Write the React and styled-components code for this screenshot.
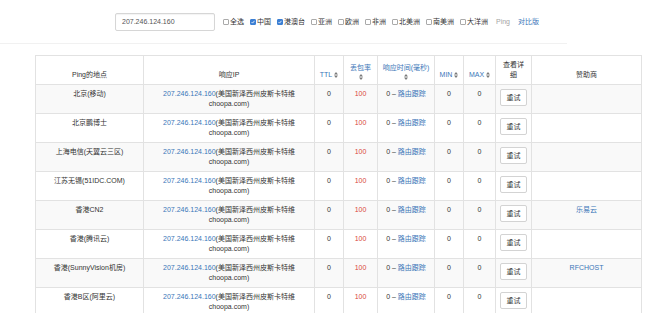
import React from 'react';
import styled, { createGlobalStyle } from 'styled-components';

const GlobalStyle = createGlobalStyle`
  html, body {
    margin: 0;
    padding: 0;
    background: #fff;
  }
  body {
    font-family: "Helvetica Neue", "Liberation Sans", "Noto Sans CJK SC", sans-serif;
    font-size: 7px;
    line-height: 10px;
    color: #333;
  }
`;

const Page = styled.div`
  width: 650px;
  height: 313px;
  overflow: hidden;
`;

// Search bar on top
const TopBar = styled.div`
  width: 567px;
  height: 44px;
  display: flex;
  align-items: center;
  padding-left: 115px;
  box-sizing: border-box;
  border-bottom: 1px solid #f1f1f1;
`;

const IpInput = styled.div`
  width: 100px;
  height: 18px;
  box-sizing: border-box;
  border: 1px solid #d6d6d6;
  border-radius: 2px;
  padding-left: 6px;
  display: flex;
  align-items: center;
  color: #555;
  margin-right: 8px;
  box-shadow: inset 0 1px 1px rgba(0, 0, 0, 0.05);
`;

const Region = styled.label`
  display: flex;
  align-items: center;
  margin-right: 6px;
  color: #333;
`;

const Box = styled.span`
  width: 4px;
  height: 4px;
  border: 1px solid ${props => (props.$checked ? '#3b7fd4' : '#aaa')};
  background: ${props => (props.$checked ? '#3b7fd4' : '#fff')};
  border-radius: 1px;
  margin-right: 1px;
  display: flex;
  align-items: center;
  justify-content: center;
`;

const Muted = styled.span`
  color: #a5a5a5;
  margin: 0 8px 0 2px;
`;

const Link = styled.a`
  color: #3a76b8;
  text-decoration: none;
`;

// Result table
const Table = styled.table`
  margin: 11px 0 0 35px;
  width: 606px;
  table-layout: fixed;
  border-collapse: collapse;
  border: 1px solid #dedede;
`;

const Th = styled.th`
  font-weight: normal;
  color: #333;
  text-align: center;
  vertical-align: bottom;
  padding: 4px;
  border: 1px solid #e2e2e2;
  height: 20px;
`;

const Row = styled.tr`
  background: ${props => (props.$odd ? '#f9f9f9' : '#fff')};
`;

const Td = styled.td`
  text-align: center;
  vertical-align: top;
  padding: 4px;
  border: 1px solid #e2e2e2;
  height: 20px;
  color: ${props => (props.$red ? '#d9453d' : '#333')};
`;

const Retry = styled.button`
  width: 27px;
  height: 17px;
  padding: 0;
  font: inherit;
  color: #333;
  background: #fff;
  border: 1px solid #d3d3d3;
  border-radius: 2px;
  cursor: pointer;
`;

const SortIcon = ({ block }) => (
  <svg
    width="4"
    height="6"
    viewBox="0 0 4 6"
    style={{ display: block ? 'block' : 'inline-block', margin: block ? '1px auto 0' : '0 0 0 2px', verticalAlign: '-0.5px' }}
  >
    <path d="M2 0 L4 2.4 L0 2.4 Z M0 3.6 L4 3.6 L2 6 Z" fill="#7a7a7a" />
  </svg>
);

const Sortable = ({ label, block }) => (
  <>
    <Link href="#">{label}</Link>
    <SortIcon block={block} />
  </>
);

const regions = [
  { name: '全选', checked: false },
  { name: '中国', checked: true },
  { name: '港澳台', checked: true },
  { name: '亚洲', checked: false },
  { name: '欧洲', checked: false },
  { name: '非洲', checked: false },
  { name: '北美洲', checked: false },
  { name: '南美洲', checked: false },
  { name: '大洋洲', checked: false },
];

const rows = [
  { place: '北京(移动)' },
  { place: '北京鹏博士' },
  { place: '上海电信(天翼云三区)' },
  { place: '江苏无锡(51IDC.COM)' },
  { place: '香港CN2', sponsor: '乐易云' },
  { place: '香港(腾讯云)' },
  { place: '香港(SunnyVision机房)', sponsor: 'RFCHOST' },
  { place: '香港B区(阿里云)' },
];

const widths = [108, 171, 29, 34, 57, 29, 32, 36, 110];

const Check = () => (
  <svg width="4" height="4" viewBox="0 0 4 4">
    <path d="M0.5 2 L1.6 3.1 L3.5 0.8" stroke="#fff" strokeWidth="0.8" fill="none" />
  </svg>
);

export default function App() {
  return (
    <Page>
      <GlobalStyle />
      <TopBar>
        <IpInput>207.246.124.160</IpInput>
        {regions.map(r => (
          <Region key={r.name}>
            <Box $checked={r.checked}>{r.checked && <Check />}</Box>
            {r.name}
          </Region>
        ))}
        <Muted>Ping</Muted>
        <Link href="#">对比版</Link>
      </TopBar>

      <Table>
        <colgroup>
          {widths.map((w, i) => (
            <col key={i} style={{ width: w }} />
          ))}
        </colgroup>
        <thead>
          <tr>
            <Th>Ping的地点</Th>
            <Th>响应IP</Th>
            <Th><Sortable label="TTL" /></Th>
            <Th><Sortable label="丢包率" block /></Th>
            <Th><Sortable label="响应时间(毫秒)" block /></Th>
            <Th><Sortable label="MIN" /></Th>
            <Th><Sortable label="MAX" /></Th>
            <Th>查看详<br />细</Th>
            <Th>赞助商</Th>
          </tr>
        </thead>
        <tbody>
          {rows.map((r, i) => (
            <Row key={r.place} $odd={i % 2 === 0}>
              <Td>{r.place}</Td>
              <Td>
                <Link href="#">207.246.124.160</Link>(美国新泽西州皮斯卡特维choopa.com)
              </Td>
              <Td>0</Td>
              <Td $red>100</Td>
              <Td>
                0 – <Link href="#">路由跟踪</Link>
              </Td>
              <Td>0</Td>
              <Td>0</Td>
              <Td>
                <Retry>重试</Retry>
              </Td>
              <Td>{r.sponsor && <Link href="#">{r.sponsor}</Link>}</Td>
            </Row>
          ))}
        </tbody>
      </Table>
    </Page>
  );
}
